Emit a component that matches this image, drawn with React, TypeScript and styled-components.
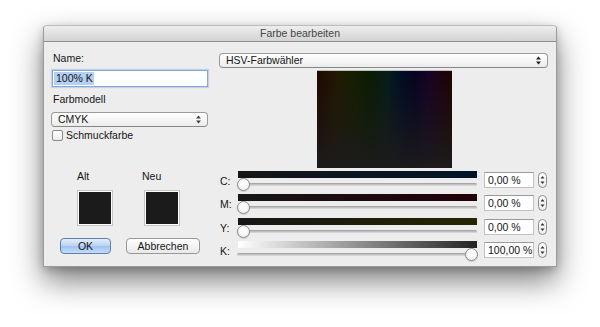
import React from 'react';
import styled, { createGlobalStyle } from 'styled-components';

const Global = createGlobalStyle`
  html, body { margin: 0; padding: 0; background: #ffffff; }
  body {
    font-family: "Liberation Sans", Arial, sans-serif;
    font-size: 10.5px;
    color: #151515;
  }
`;

const Page = styled.div`
  width: 600px;
  height: 327px;
  box-sizing: border-box;
  padding: 25px 0 0 43px;
  overflow: hidden;
`;

const Window = styled.div`
  width: 514px;
  height: 242px;
  box-sizing: border-box;
  background: #ededed;
  border: 1px solid #9a9a9a;
  border-top-color: #bdbdbd;
  border-radius: 4px 4px 0 0;
  box-shadow: 0 14px 30px rgba(0, 0, 0, 0.5), 0 3px 8px rgba(0, 0, 0, 0.2);
  display: flex;
  flex-direction: column;
`;

const TitleBar = styled.div`
  height: 15px;
  line-height: 15px;
  text-align: center;
  color: #454545;
  background: linear-gradient(to bottom, #eeeeee, #d3d3d3);
  border-bottom: 1px solid #8e8e8e;
  border-radius: 3px 3px 0 0;
`;

const Body = styled.div`
  display: flex;
  padding-left: 8px;
`;

const LeftCol = styled.div`
  width: 156px;
  display: flex;
  flex-direction: column;
  padding-top: 9px;
`;

const RightCol = styled.div`
  width: 329px;
  margin-left: 11px;
  display: flex;
  flex-direction: column;
  padding-top: 11px;
`;

const Label = styled.div<{ $mt?: number }>`
  height: 14px;
  line-height: 14px;
  padding-left: 1px;
  margin-top: ${(p) => p.$mt ?? 0}px;
`;

const NameInput = styled.div`
  margin-top: 5px;
  height: 17px;
  box-sizing: border-box;
  border: 1px solid #84a7da;
  box-shadow: 0 0 1px 1px rgba(120, 160, 220, 0.35);
  background: #fff;
  padding: 1px 1px;
  display: flex;
`;

const Selection = styled.span`
  background: #b3cff2;
  line-height: 13px;
  padding: 0 1px 0 2px;
`;

const Popup = styled.div<{ $mt?: number; $ml?: number }>`
  margin-top: ${(p) => p.$mt ?? 0}px;
  margin-left: ${(p) => p.$ml ?? 0}px;
  height: 15px;
  box-sizing: border-box;
  border: 1px solid #9b9b9b;
  border-bottom-color: #888;
  border-radius: 4px;
  background: linear-gradient(to bottom, #ffffff 0%, #f6f6f6 50%, #ebebeb 100%);
  display: flex;
  align-items: center;
  justify-content: space-between;
  padding: 0 6px 0 6px;
  line-height: 13px;
`;

const CheckRow = styled.div`
  margin-top: 2px;
  height: 12px;
  display: flex;
  align-items: center;
  gap: 3px;
`;

const CheckBox = styled.div`
  width: 11px;
  height: 11px;
  box-sizing: border-box;
  border: 1px solid #8a8a8a;
  border-radius: 2px;
  background: linear-gradient(to bottom, #ffffff, #ececec);
`;

const SwatchGrid = styled.div`
  margin-top: 28px;
  padding-left: 25px;
  display: grid;
  grid-template-columns: 36px 36px;
  column-gap: 31px;
  row-gap: 7px;
`;

const SwatchLabel = styled.div<{ $shift?: number }>`
  height: 14px;
  line-height: 14px;
  margin-left: ${(p) => p.$shift ?? 0}px;
`;

const Swatch = styled.div`
  width: 36px;
  height: 36px;
  box-sizing: border-box;
  border: 1px solid #f7f7f7;
  outline: 1px solid #c4c4c4;
  outline-offset: -1px;
  background: #1b1b1b;
  box-shadow: inset 0 0 0 1px #fdfdfd;
`;

const ButtonRow = styled.div`
  margin-top: 12px;
  padding-left: 8px;
  display: flex;
  gap: 15px;
`;

const Button = styled.div<{ $w: number; $primary?: boolean }>`
  width: ${(p) => p.$w}px;
  height: 16px;
  box-sizing: border-box;
  border-radius: 4px;
  border: 1px solid ${(p) => (p.$primary ? '#5f7fb3' : '#999')};
  background: ${(p) =>
    p.$primary
      ? 'linear-gradient(to bottom, #e3eefc 0%, #b8d2f4 50%, #9fc1ee 51%, #c5dcf8 100%)'
      : 'linear-gradient(to bottom, #ffffff 0%, #f4f4f4 50%, #e9e9e9 100%)'};
  text-align: center;
  line-height: 14px;
`;

const ColorField = styled.div`
  margin-top: 2px;
  margin-left: 98px;
  width: 135px;
  height: 98px;
  box-sizing: border-box;
  border-top: 1px solid #bdbdbd;
  background:
    linear-gradient(to bottom, rgba(28, 27, 27, 0) 0%, rgba(28, 27, 27, 0.5) 55%, #1c1b1b 100%),
    linear-gradient(
      to right,
      #1e0800 0%,
      #221800 14%,
      #141e00 28%,
      #0a1c02 40%,
      #061c1a 52%,
      #000b24 64%,
      #060322 72%,
      #160226 82%,
      #1c0214 90%,
      #1e0400 100%
    );
`;

const Sliders = styled.div`
  margin-top: 3px;
  display: flex;
  flex-direction: column;
`;

const Row = styled.div`
  display: flex;
  height: 23.4px;
`;

const RowLabel = styled.div`
  width: 18px;
  padding-left: 1px;
  padding-top: 3px;
  line-height: 14px;
  height: 14px;
`;

const SliderBox = styled.div`
  position: relative;
  width: 239px;
`;

const ColorBar = styled.div<{ $from: string; $to: string }>`
  height: 7px;
  background: linear-gradient(to right, ${(p) => p.$from}, ${(p) => p.$to});
`;

const Track = styled.div`
  margin-top: 5px;
  margin-left: -1px;
  height: 3px;
  border-radius: 2px;
  background: linear-gradient(to bottom, #9a9a9a, #c8c8c8 60%, #dedede);
`;

const Knob = styled.div`
  position: absolute;
  top: 7px;
  width: 13px;
  height: 13px;
  box-sizing: border-box;
  border-radius: 50%;
  border: 1px solid #8c8c8c;
  background: radial-gradient(circle at 50% 35%, #ffffff 0%, #f7f7f7 50%, #e2e2e2 100%);
  box-shadow: 0 1px 1px rgba(0, 0, 0, 0.15);
`;

const Field = styled.div`
  margin-left: 7px;
  margin-top: 1px;
  width: 50px;
  height: 16px;
  box-sizing: border-box;
  border: 1px solid #c2c2c2;
  border-top-color: #9a9a9a;
  background: #fff;
  padding-left: 3px;
  line-height: 14px;
`;

const Stepper = styled.div`
  margin-left: 4px;
  margin-top: 1px;
  width: 9px;
  height: 16px;
  box-sizing: border-box;
  border: 1px solid #8c8c8c;
  border-radius: 5px;
  background: linear-gradient(to bottom, #ffffff, #ececec);
  display: flex;
  align-items: center;
  justify-content: center;
`;

const Arrows = ({ color = '#222' }: { color?: string }) => (
  <svg width="5" height="9" viewBox="0 0 5 9">
    <polygon points="2.5,0.5 5,3.5 0,3.5" fill={color} />
    <polygon points="0,5.5 5,5.5 2.5,8.5" fill={color} />
  </svg>
);

const StepArrows = () => (
  <svg width="5" height="10" viewBox="0 0 5 10">
    <polygon points="2.5,1 4.5,3.5 0.5,3.5" fill="#333" />
    <polygon points="0.5,6.5 4.5,6.5 2.5,9" fill="#333" />
  </svg>
);

type Channel = { label: string; from: string; to: string; value: number; text: string };

const channels: Channel[] = [
  { label: 'C:', from: '#161616', to: '#001428', value: 0, text: '0,00 %' },
  { label: 'M:', from: '#161616', to: '#220008', value: 0, text: '0,00 %' },
  { label: 'Y:', from: '#161616', to: '#272600', value: 0, text: '0,00 %' },
  { label: 'K:', from: '#ffffff', to: '#222222', value: 100, text: '100,00 %' },
];

export default function App() {
  return (
    <>
      <Global />
      <Page>
        <Window>
          <TitleBar>Farbe bearbeiten</TitleBar>
          <Body>
            <LeftCol>
              <Label>Name:</Label>
              <NameInput>
                <Selection>100% K</Selection>
              </NameInput>
              <Label $mt={5}>Farbmodell</Label>
              <Popup $mt={6} $ml={-1}>
                <span>CMYK</span>
                <Arrows color="#444" />
              </Popup>
              <CheckRow>
                <CheckBox />
                <span>Schmuckfarbe</span>
              </CheckRow>
              <SwatchGrid>
                <SwatchLabel>Alt</SwatchLabel>
                <SwatchLabel $shift={-2}>Neu</SwatchLabel>
                <Swatch />
                <Swatch />
              </SwatchGrid>
              <ButtonRow>
                <Button $w={51} $primary>
                  OK
                </Button>
                <Button $w={74}>Abbrechen</Button>
              </ButtonRow>
            </LeftCol>
            <RightCol>
              <Popup>
                <span>HSV-Farbwähler</span>
                <Arrows />
              </Popup>
              <ColorField />
              <Sliders>
                {channels.map((c) => (
                  <Row key={c.label}>
                    <RowLabel>{c.label}</RowLabel>
                    <SliderBox>
                      <ColorBar $from={c.from} $to={c.to} />
                      <Track />
                      <Knob style={{ left: `${-1 + (c.value / 100) * 228}px` }} />
                    </SliderBox>
                    <Field>{c.text}</Field>
                    <Stepper>
                      <StepArrows />
                    </Stepper>
                  </Row>
                ))}
              </Sliders>
            </RightCol>
          </Body>
        </Window>
      </Page>
    </>
  );
}
